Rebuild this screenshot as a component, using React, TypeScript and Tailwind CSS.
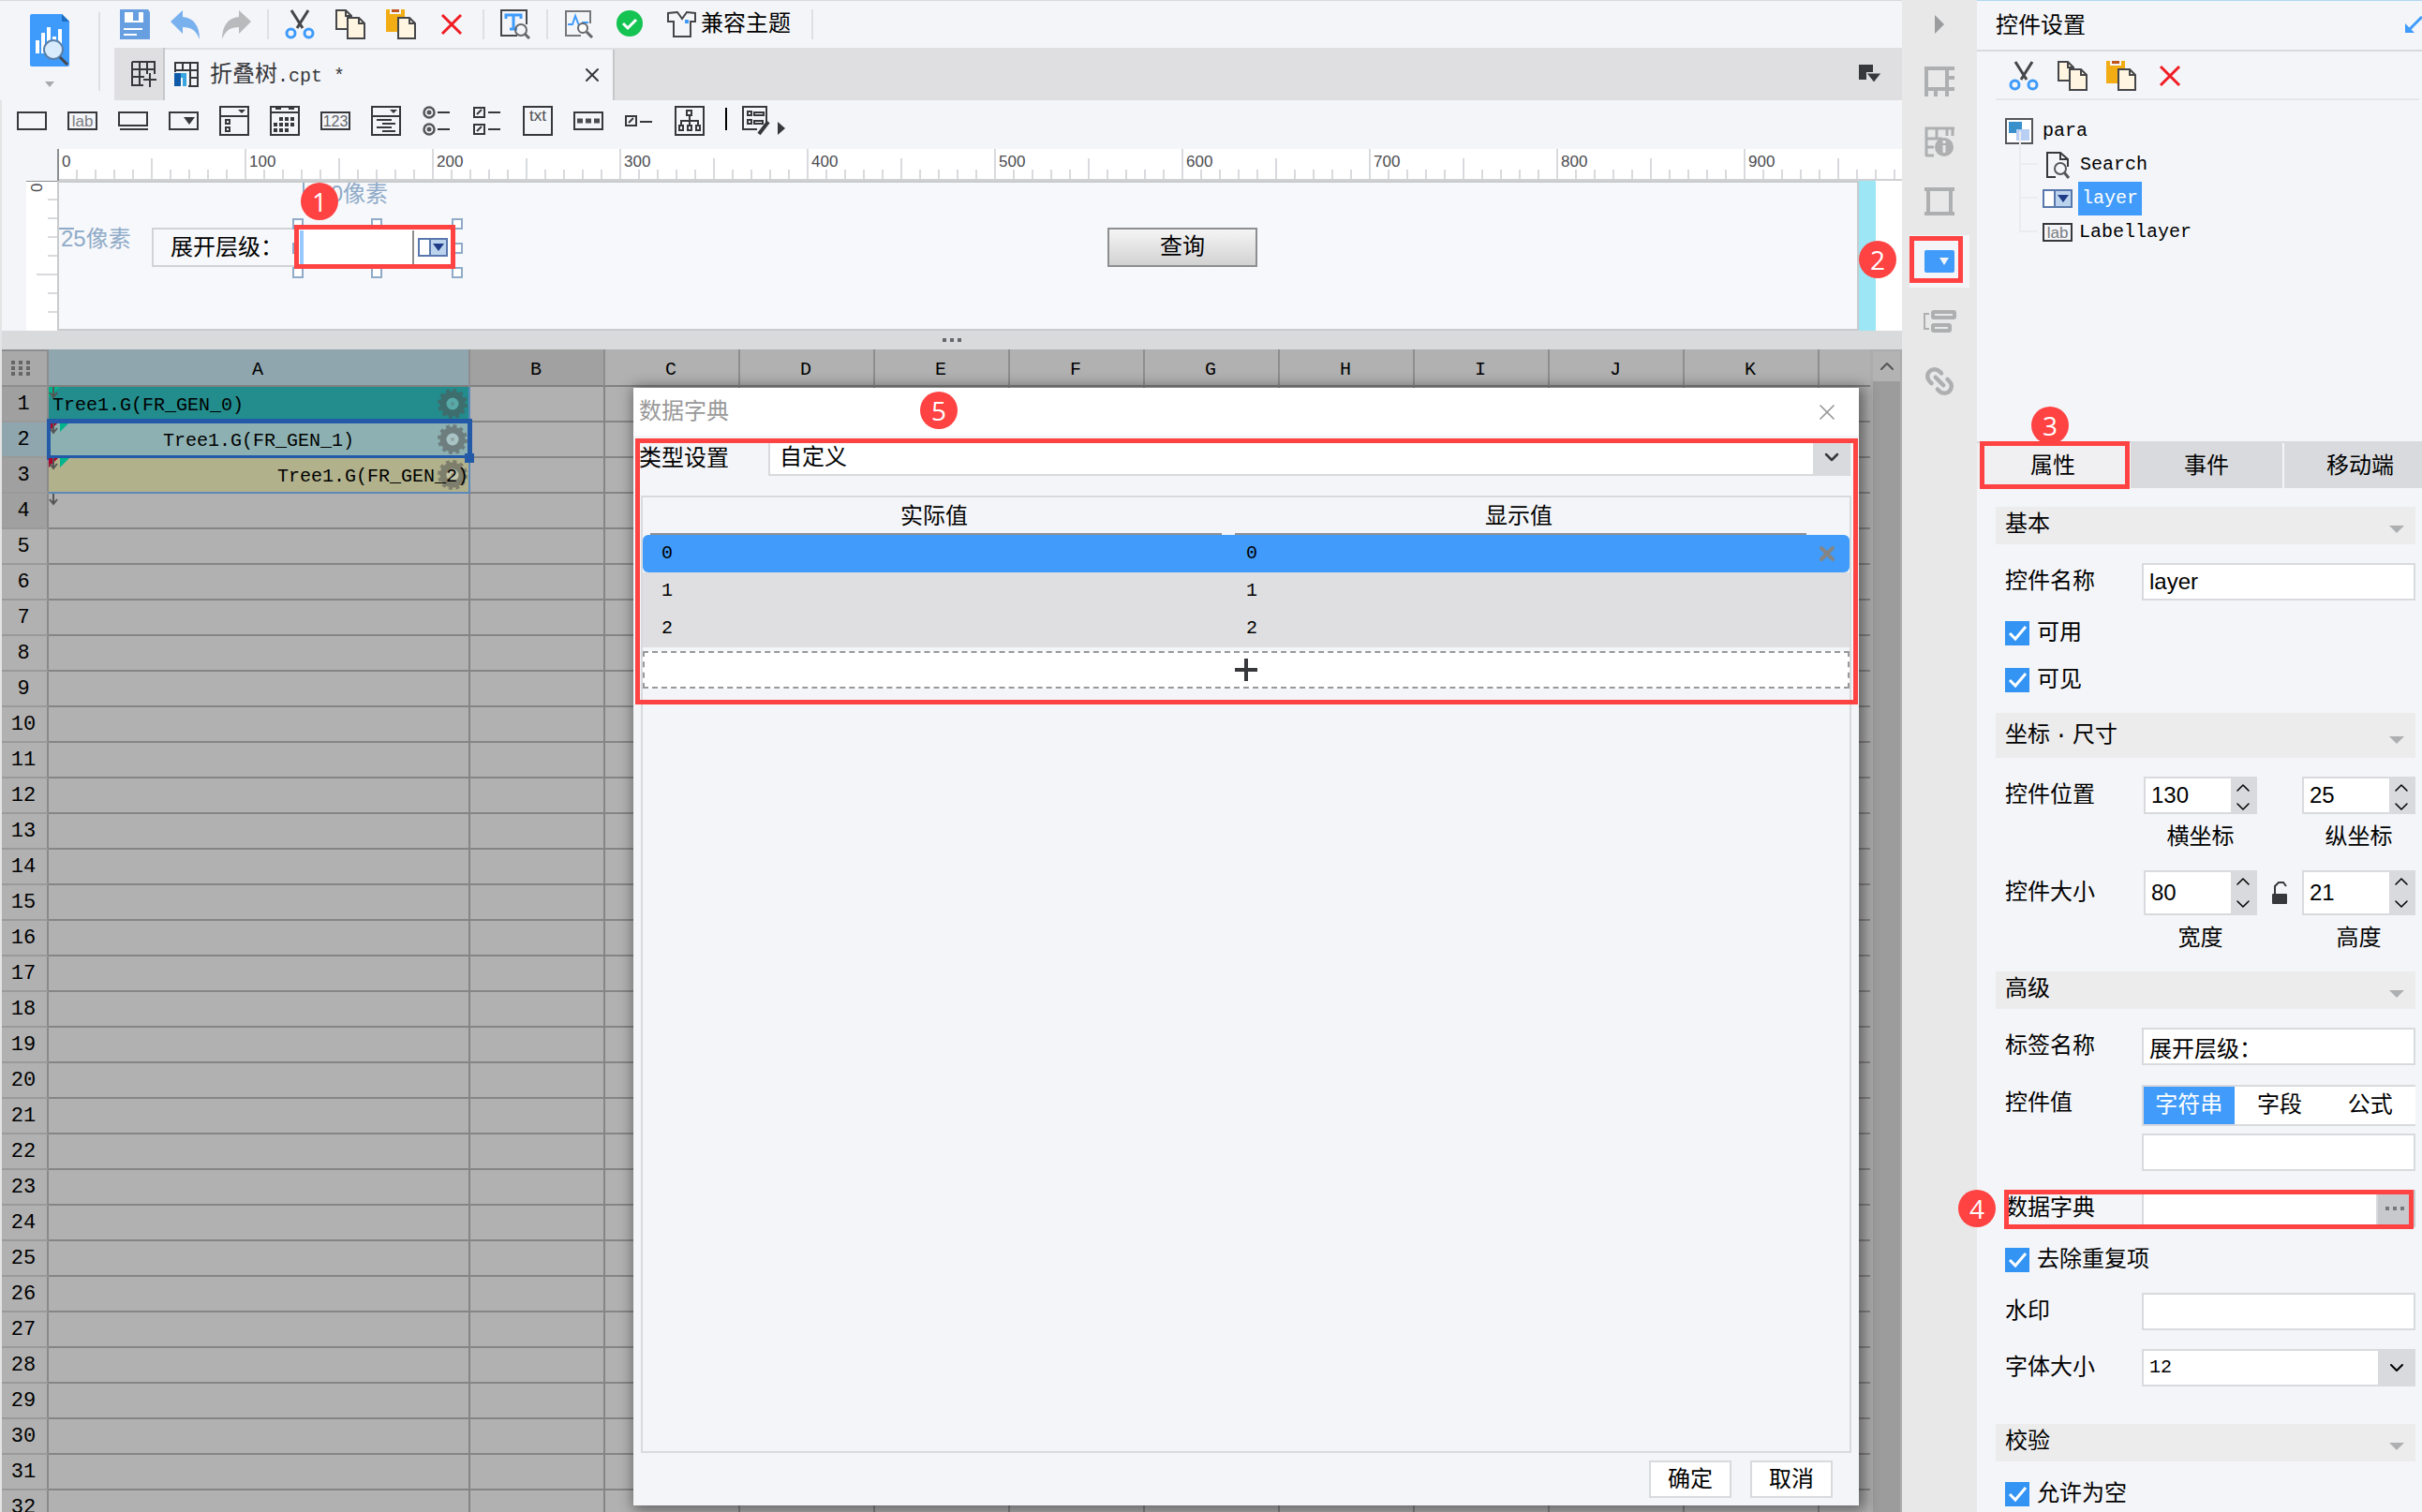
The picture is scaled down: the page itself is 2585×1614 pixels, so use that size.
import { useState } from "react";
import type { ReactNode } from "react";
import clsx from "clsx";
import { ChevronDown, ChevronUp, Link2, X } from "lucide-react";

const columns = ["A", "B", "C", "D", "E", "F", "G", "H", "I", "J", "K", ""];
const rows = Array.from({ length: 32 }, (_, i) => i + 1);

const treeCells: Record<number, { text: string; className: string }> = {
  1: { text: "Tree1.G(FR_GEN_0)", className: "bg-[#238c8c] px-1 text-left" },
  2: { text: "Tree1.G(FR_GEN_1)", className: "bg-[#8db1b2] px-1 text-center" },
  3: { text: "Tree1.G(FR_GEN_2)", className: "bg-[#b1b18c] text-right" },
};

const dictionary = [
  { actual: "0", display: "0" },
  { actual: "1", display: "1" },
  { actual: "2", display: "2" },
];

function Badge({ n, className }: { n: number; className: string }) {
  return (
    <span
      className={clsx(
        "absolute z-20 flex h-10 w-10 items-center justify-center rounded-full bg-[#ff4242] font-['Open_Sans',sans-serif] text-[28px] leading-none text-white",
        className
      )}
    >
      {n}
    </span>
  );
}

function Marker({ className }: { className: string }) {
  return (
    <span
      className={clsx(
        "pointer-events-none absolute z-10 border-[5px] border-[#ff4242]",
        className
      )}
    />
  );
}

function Icon({ children, className }: { children: ReactNode; className?: string }) {
  return (
    <svg
      viewBox="0 0 32 32"
      fill="none"
      className={clsx("h-8 w-8 shrink-0", className)}
      aria-hidden="true"
    >
      {children}
    </svg>
  );
}

function ToolButton({ label, children }: { label: string; children: ReactNode }) {
  return (
    <button type="button" aria-label={label} className="flex h-8 shrink-0 items-center">
      {children}
    </button>
  );
}

function Separator() {
  return <span className="mx-[17px] h-8 w-[2px] bg-[#dfe0e3]" />;
}

function CutIcon() {
  return (
    <Icon>
      <path d="M7 1 19 20M25 1 13 20" stroke="#45464a" strokeWidth="3" />
      <circle cx="6.500" cy="25.500" r="4.500" stroke="#3f9bfb" strokeWidth="3" />
      <circle cx="25.500" cy="25.500" r="4.500" stroke="#3f9bfb" strokeWidth="3" />
    </Icon>
  );
}

function CopyIcon() {
  return (
    <Icon>
      <path d="M12 21H1V1h10l6 6v4" fill="#fff5e0" stroke="#45464a" strokeWidth="2" />
      <path d="M13 9h12l6 6v16H13z" fill="#fff5e0" stroke="#45464a" strokeWidth="2" />
      <path d="M11 1v6h6M25 9v6h6" stroke="#45464a" strokeWidth="2" />
    </Icon>
  );
}

function PasteIcon() {
  return (
    <Icon>
      <path d="M0 0h20v24H0z" fill="#f2ac14" />
      <path d="M4 0h12v5H4z" fill="#f4f5f8" />
      <path d="M6 0h8v3H6z" fill="#c0561c" />
      <path d="M13 9h12l6 6v16H13z" fill="#fff5e0" stroke="#45464a" strokeWidth="2" />
      <path d="M25 9v6h6" stroke="#45464a" strokeWidth="2" />
    </Icon>
  );
}

function DeleteIcon() {
  return (
    <Icon>
      <path d="m6 6 20 20M26 6 6 26" stroke="#f01c24" strokeWidth="3" />
    </Icon>
  );
}

function ComboIcon({ className }: { className?: string }) {
  return (
    <svg viewBox="0 0 32 20" className={clsx("h-5 w-8 shrink-0", className)} aria-hidden="true">
      <path d="M1 1h30v18H1z" fill="#fff" stroke="#5878ad" strokeWidth="2" />
      <path d="M13 2h17v16H13z" fill="#bcd3ee" />
      <path d="M13 1v18" stroke="#5878ad" strokeWidth="2" />
      <path d="M16 6h12l-6 8z" fill="#1e3c88" />
    </svg>
  );
}

function LabelIcon() {
  return (
    <Icon>
      <path d="M1 7h30v18H1z" stroke="#37383c" strokeWidth="2" />
      <text x="16" y="22" textAnchor="middle" fontSize="17" fontFamily="Liberation Sans" fill="#7b7c80">
        lab
      </text>
    </Icon>
  );
}

const stroke = { stroke: "#37383c", strokeWidth: 2 };

const widgets: { label: string; icon: ReactNode }[] = [
  { label: "文本", icon: <Icon><path d="M1 7h30v18H1z" {...stroke} /></Icon> },
  { label: "标签", icon: <LabelIcon /> },
  { label: "按钮", icon: <Icon><path d="M1 7h30v14H1zM2 25h30" {...stroke} /></Icon> },
  {
    label: "下拉框",
    icon: (
      <Icon>
        <path d="M1 7h30v18H1z" {...stroke} />
        <path d="M16 12h12l-6 8z" fill="#37383c" />
      </Icon>
    ),
  },
  {
    label: "下拉复选框",
    icon: (
      <Icon>
        <path d="M1 1h30v30H1zM1 11h30M7 15h4v4H7zM7 23h4v4H7z" {...stroke} />
        <path d="M20 4h8l-4 4z" fill="#37383c" />
      </Icon>
    ),
  },
  {
    label: "日期",
    icon: (
      <Icon>
        <path d="M1 1h30v30H1zM1 7h30" {...stroke} />
        <path d="M6 3h6M20 3h6" {...stroke} />
        <path d="M10 14h16M4 20h22M4 26h16" stroke="#37383c" strokeWidth="4" strokeDasharray="4 2" />
      </Icon>
    ),
  },
  {
    label: "数字",
    icon: (
      <Icon>
        <path d="M1 7h30v18H1z" {...stroke} />
        <text x="16" y="22" textAnchor="middle" fontSize="16" fontFamily="Liberation Sans" fill="#66676b">
          123
        </text>
      </Icon>
    ),
  },
  {
    label: "下拉树",
    icon: (
      <Icon>
        <path d="M1 1h30v30H1zM1 11h30M6 15h16M12 19h14M6 23h16M12 27h14" {...stroke} />
        <path d="M20 4h8l-4 4z" fill="#37383c" />
      </Icon>
    ),
  },
  {
    label: "单选按钮组",
    icon: (
      <Icon>
        <g stroke="#55565a" strokeWidth="2.500">
          <circle cx="8" cy="7" r="5.500" />
          <circle cx="8" cy="25" r="5.500" />
        </g>
        <circle cx="8" cy="7" r="2.500" fill="#55565a" />
        <circle cx="8" cy="25" r="2.500" fill="#55565a" />
        <path d="M17 7h13M17 25h13" {...stroke} />
      </Icon>
    ),
  },
  {
    label: "复选框组",
    icon: (
      <Icon>
        <path d="M2 2h11v10H2zM2 20h11v10H2zM17 7h13M17 25h13" {...stroke} />
        <path d="m5 9 5-5M5 27l5-5" {...stroke} />
      </Icon>
    ),
  },
  {
    label: "文本域",
    icon: (
      <Icon>
        <path d="M1 1h30v30H1z" {...stroke} />
        <text x="16" y="16" textAnchor="middle" fontSize="17" fontFamily="Liberation Sans" fill="#4b4c50">
          txt
        </text>
      </Icon>
    ),
  },
  {
    label: "密码",
    icon: (
      <Icon>
        <path d="M1 7h30v18H1z" {...stroke} />
        <path d="M4 16h24" stroke="#4b4c50" strokeWidth="5" strokeDasharray="6 3" />
      </Icon>
    ),
  },
  {
    label: "复选框",
    icon: (
      <Icon>
        <path d="M2 11h11v10H2zM17 17h13" {...stroke} />
        <path d="m5 18 5-5" {...stroke} />
      </Icon>
    ),
  },
  {
    label: "视图树",
    icon: (
      <Icon>
        <path d="M1 1h30v30H1z" {...stroke} />
        <path d="M13 5h5v5h-5zM5 21h4v5H5zM14 21h4v5h-4zM23 21h4v5h-4zM16 10v11M7 21v-5h18v5" {...stroke} />
      </Icon>
    ),
  },
];

function Gear() {
  return (
    <svg viewBox="0 0 34 34" className="absolute top-[1px] right-0 h-[34px] w-[34px]" aria-hidden="true">
      <g fill="none" stroke="#555" opacity="0.55">
        <circle cx="17" cy="17" r="10" strokeWidth="7" />
        <circle cx="17" cy="17" r="14.500" strokeWidth="3" strokeDasharray="4 3.590" />
      </g>
      <circle cx="17" cy="17" r="6.500" fill="#fff" opacity="0.25" />
      <circle cx="17" cy="17" r="2" fill="#555" opacity="0.3" />
    </svg>
  );
}

function CellMark({ row }: { row: number }) {
  return (
    <svg viewBox="0 0 24 14" className="absolute top-0 left-0 h-[14px] w-6" aria-hidden="true">
      {row === 1 && <path d="M0 0h12L0 12z" fill="#00b38c" />}
      {(row === 2 || row === 3) && (
        <>
          <path d="M0 0h10L0 10z" fill="#b0002c" />
          <path d="M12 0h10L12 10z" fill="#00b38c" />
        </>
      )}
      <path d="M5 0v11M1 6l4 5 4-5" fill="none" stroke="#555" strokeWidth="2" />
    </svg>
  );
}

function Header() {
  return (
    <header className="flex h-[107px] shrink-0 border-t border-[#dadadb]">
      <div className="flex w-[122px] shrink-0">
        <button type="button" aria-label="菜单" className="flex w-[105px] flex-col items-center gap-4 pt-[14px]">
          <svg viewBox="0 0 42 56" className="h-14 w-[42px]" aria-hidden="true">
            <path d="M2 0h32l8 8v46a2 2 0 0 1-2 2H2a2 2 0 0 1-2-2V2a2 2 0 0 1 2-2z" fill="#3f9bfb" />
            <path d="M34 0v8h8z" fill="#1c6fc0" />
            <path d="M8 42V28M14 42V20M20 42V14M26 42V24M32 42V16" stroke="#fff" strokeWidth="4" />
            <circle cx="25" cy="38" r="10" fill="#d8ebfd" stroke="#5a7fa8" strokeWidth="2" />
            <path d="m32 46 8 8" stroke="#45464a" strokeWidth="3" />
          </svg>
          <svg viewBox="0 0 10 6" className="h-[6px] w-[10px]" aria-hidden="true">
            <path d="M0 0h10L5 6z" fill="#a8a9ac" />
          </svg>
        </button>
        <span className="mt-3 h-[84px] w-[2px] bg-[#dfe0e3]" />
      </div>
      <div className="flex min-w-0 flex-1 flex-col">
        <div className="flex h-[50px] shrink-0 items-center pl-[6px]">
          <div className="flex gap-[22px]">
            <ToolButton label="保存">
              <Icon>
                <path d="M0 0h30l2 3v29H0z" fill="#689fe0" />
                <path d="M5 3h20v11H5z" fill="#fff" />
                <path d="M14 3h6v9h-6z" fill="#689fe0" />
                <path d="M4 21h20M4 27h14" stroke="#fff" strokeWidth="2" />
              </Icon>
            </ToolButton>
            <ToolButton label="撤销">
              <Icon>
                <path d="M0 13 13 1v7c12 1 18 10 18 24C27 22 22 19 13 19v7z" fill="#79b1ee" />
              </Icon>
            </ToolButton>
            <ToolButton label="重做">
              <Icon>
                <path d="M32 13 19 1v7C7 9 1 18 1 32c4-10 9-13 18-13v7z" fill="#b9babc" />
              </Icon>
            </ToolButton>
          </div>
          <Separator />
          <div className="flex gap-[22px]">
            <ToolButton label="剪切"><CutIcon /></ToolButton>
            <ToolButton label="复制"><CopyIcon /></ToolButton>
            <ToolButton label="粘贴"><PasteIcon /></ToolButton>
            <ToolButton label="删除"><DeleteIcon /></ToolButton>
          </div>
          <Separator />
          <ToolButton label="模板主题">
            <Icon>
              <path d="M28 16V1H1v27h17" stroke="#45464a" strokeWidth="2" />
              <path d="M6 10V6h16v4M14 6v15M10 21h8" stroke="#3f9bfb" strokeWidth="3" />
              <circle cx="22" cy="22" r="6" stroke="#66676b" strokeWidth="2" />
              <path d="m26 26 5 5" stroke="#66676b" strokeWidth="3" />
            </Icon>
          </ToolButton>
          <Separator />
          <div className="flex gap-[22px]">
            <ToolButton label="性能">
              <Icon>
                <path d="M28 16V3H2v26h16" stroke="#77787c" strokeWidth="2" />
                <path d="M4 17h5l3-9 5 13 3-6h6" stroke="#3f9bfb" strokeWidth="2" />
                <circle cx="20" cy="21" r="5" fill="#fff" stroke="#66676b" strokeWidth="2" />
                <path d="m24 25 6 6" stroke="#66676b" strokeWidth="3" />
              </Icon>
            </ToolButton>
            <ToolButton label="检测通过">
              <Icon>
                <circle cx="16" cy="16" r="14" fill="#14c352" />
                <path d="m9 16 5 5 9-9" stroke="#fff" strokeWidth="3" />
              </Icon>
            </ToolButton>
            <button type="button" className="flex items-center gap-1 pl-[2px] text-2xl leading-8 text-black">
              <Icon>
                <path d="M11 3 1 4v9h6v16h18V13h5V4l-9-1-5 7z" stroke="#45464a" strokeWidth="2" />
                <path d="M19 11h4v4h-4z" fill="#3f9bfb" />
              </Icon>
              <span className="pt-[2px]">兼容主题</span>
            </button>
          </div>
          <span className="ml-[22px] h-8 w-[2px] bg-[#dfe0e3]" />
        </div>
        <div className="flex flex-1 bg-[#dfdfe2]">
          <button type="button" aria-label="新建" className="flex w-[54px] items-center justify-center border-r-2 border-[#c6c7c9]">
            <Icon className="ml-3">
              <path d="M3 3h24v13M3 3v25h12M3 11h24M3 19h13M11 3v25M19 3v13M15 22h14M22 15v15" {...stroke} />
            </Icon>
          </button>
          <div className="mt-[2px] flex w-[480px] items-center border-r-2 border-[#c6c7c9] bg-[#f4f5f8] pr-[10px] pl-2 text-2xl text-[#37383c]">
            <Icon>
              <path d="M3 13V3h24v25H17M3 11h24M19 19h8M11 3v8M19 3v25" {...stroke} />
              <path d="M2 14h7v14H2z" fill="#0f5aa8" />
              <path d="M9 14h6v14h-4v-9H9z" fill="#38a5e0" />
            </Icon>
            <span className="ml-2 flex-1 pt-[2px] leading-8">
              折叠树<span className="text-xl">.cpt *</span>
            </span>
            <button type="button" aria-label="关闭标签">
              <X className="h-6 w-6" strokeWidth={2} />
            </button>
          </div>
          <button type="button" aria-label="标签列表" className="mr-5 ml-auto">
            <svg viewBox="0 0 26 20" className="h-5 w-[26px]" aria-hidden="true">
              <path d="M0 0h15v8H8v8H0z" fill="#37383c" />
              <path d="M8 9h16l-8 10z" fill="#37383c" stroke="#dfdfe2" />
            </svg>
          </button>
        </div>
      </div>
    </header>
  );
}

function WidgetBar() {
  return (
    <div className="flex h-[52px] shrink-0 items-start pt-[6px] pl-4">
      <div className="flex gap-[22px]">
        {widgets.map((item) => (
          <ToolButton key={item.label} label={item.label}>
            {item.icon}
          </ToolButton>
        ))}
      </div>
      <span className="mt-[2px] mr-4 ml-[22px] h-6 w-[2px] bg-black" />
      <ToolButton label="预定义控件">
        <Icon>
          <path d="M26 18V1H1v24h15" {...stroke} />
          <path d="M6 6h4v4H6zM6 15h4v4H6zM13 7h10v3H13zM13 16h9v3h-9z" {...stroke} />
          <path d="m28 17-10 13" stroke="#37383c" strokeWidth="4" />
        </Icon>
        <svg viewBox="0 0 8 14" className="mt-4 ml-[6px] h-[14px] w-2" aria-hidden="true">
          <path d="M0 0v14l8-7z" fill="#37383c" />
        </svg>
      </ToolButton>
    </div>
  );
}

function Ruler() {
  return (
    <div className="flex h-[34px] shrink-0">
      <div className="w-[59px] shrink-0" />
      <svg className="h-full min-w-0 flex-1 bg-white" aria-hidden="true">
        <defs>
          <pattern id="ticks" width="200" height="34" patternUnits="userSpaceOnUse">
            <path
              d="M1 0v34M101 10v24M21 22v12M41 22v12M61 22v12M81 22v12M121 22v12M141 22v12M161 22v12M181 22v12"
              stroke="#d9dadd"
              strokeWidth="2"
            />
          </pattern>
        </defs>
        <rect width="100%" height="34" fill="url(#ticks)" />
        <rect y="32" width="100%" height="2" fill="#d0d1d4" />
        <path d="M1 0v34" stroke="#8d8e90" strokeWidth="2" />
        {[0, 1, 2, 3, 4, 5, 6, 7, 8, 9].map((n) => (
          <text key={n} x={n * 200 + 5} y={19} fontSize="17" fontFamily="Liberation Sans" fill="#4b4c50">
            {n * 100}
          </text>
        ))}
      </svg>
    </div>
  );
}

function Handle({ className }: { className: string }) {
  return <span className={clsx("absolute h-3 w-3 border-2 border-[#8fabc8] bg-white", className)} />;
}

function ParamCanvas() {
  return (
    <div className="flex h-40 shrink-0 bg-white">
      <div className="w-[26px] shrink-0 bg-[#f4f5f8]" />
      <svg className="h-full w-[33px] shrink-0 bg-white" aria-hidden="true">
        <path
          d="M23 20h10M23 40h10M23 60h10M23 80h10M11 100h22M23 120h10M23 140h10"
          stroke="#d9dadd"
          strokeWidth="2"
        />
        <text x="-12" y="17" transform="rotate(-90)" fontSize="17" fontFamily="Liberation Sans" fill="#4b4c50">
          0
        </text>
        <path d="M0 0h33" stroke="#8d8e90" strokeWidth="2" />
      </svg>
      <div className="relative min-w-0 flex-1 border-2 border-[#c9cbcd] bg-[#f7f8fb]">
        <span className="absolute top-0 left-[260px] h-4 w-[2px] bg-[#8fabc8]" />
        <span className="absolute top-0 left-[263px] font-['Liberation_Sans','Noto_Sans_CJK_SC',sans-serif] text-2xl leading-6 text-[#8fabc8]">
          130像素
        </span>
        <span className="absolute top-12 left-0 h-[2px] w-4 bg-[#8fabc8]" />
        <span className="absolute top-12 left-[2px] font-['Liberation_Sans','Noto_Sans_CJK_SC',sans-serif] text-2xl leading-6 text-[#8fabc8]">
          25像素
        </span>
        <label
          htmlFor="param-layer"
          className="absolute top-12 left-[99px] h-[42px] w-[154px] border-2 border-[#d2d3d5] pl-[18px] text-2xl leading-[42px] whitespace-nowrap text-black"
        >
          展开层级：
        </label>
        <Handle className="top-[38px] left-[249px]" />
        <Handle className="top-[38px] left-[333px]" />
        <Handle className="top-[38px] left-[419px]" />
        <Handle className="top-16 left-[249px]" />
        <Handle className="top-16 left-[419px]" />
        <Handle className="top-[90px] left-[249px]" />
        <Handle className="top-[90px] left-[333px]" />
        <Handle className="top-[90px] left-[419px]" />
        <div className="absolute top-[46px] left-[252px] flex h-[46px] w-[170px] items-center bg-white pl-[5px]">
          <input id="param-layer" className="h-9 w-[122px] border-r-2 border-l-4 border-r-[#8d8e90] border-l-[#99c8ff] bg-white outline-none" />
          <ComboIcon className="ml-1" />
        </div>
        <Marker className="top-[45px] left-[251px] h-[47px] w-[172px]" />
        <Badge n={1} className="top-0 left-[258px]" />
        <button
          type="button"
          className="absolute top-12 left-[1119px] h-[42px] w-40 border-2 border-[#8d8e90] bg-linear-to-b from-[#f5f5f5] to-[#d2d2d2] pt-[2px] text-2xl leading-9 text-black"
        >
          查询
        </button>
      </div>
      <div className="w-[18px] shrink-0 bg-[#9ce6f5]" />
      <div className="relative w-7 shrink-0 bg-white">
        <Badge n={2} className="top-16 right-[6px]" />
      </div>
    </div>
  );
}

function Grid() {
  return (
    <div className="flex h-full bg-[#b1b1b1]">
      <div className="min-w-0 flex-1 overflow-hidden">
        <table className="w-full table-fixed border-separate border-spacing-0 text-xl text-black">
          <colgroup>
            <col className="w-[50px]" />
            <col className="w-[450px]" />
            {columns.slice(1, 11).map((name) => (
              <col key={name} className="w-36" />
            ))}
            <col />
          </colgroup>
          <thead>
            <tr className="h-10">
              <th className="border-2 border-l-0 border-[#8e8e8e] bg-[#a9a9a9] p-0">
                <svg viewBox="0 0 20 16" className="ml-[10px] h-4 w-5" aria-hidden="true">
                  <path d="M0 2h20M0 8h20M0 14h20" stroke="#666" strokeWidth="4" strokeDasharray="4 4" />
                </svg>
              </th>
              {columns.map((name) => (
                <th
                  key={name}
                  className={clsx(
                    "border-r-2 border-b-2 border-r-[#8e8e8e] border-b-[#808080] p-0 pt-[6px] pr-[2px] leading-6 font-normal last:border-r-0",
                    name === "A" && "border-b-[#5c89b8] bg-[#8fa6ae]",
                    name === "B" && "bg-[#a1a1a1]"
                  )}
                >
                  {name}
                </th>
              ))}
            </tr>
          </thead>
          <tbody>
            {rows.map((row) => (
              <tr key={row} className="h-[38px]">
                <th
                  className={clsx(
                    "border-r-2 border-b-2 border-r-[#8a8a8a] border-b-[#9a9a9a] p-0 pt-[2px] pr-[2px] text-[22px] leading-6 font-normal",
                    row === 2 && "bg-[#8fa6ae]",
                    row < 5 && row !== 2 && "bg-[#a0a0a0]"
                  )}
                >
                  {row}
                </th>
                {columns.map((name) => {
                  const cell = name === "A" ? treeCells[row] : undefined;
                  return (
                    <td
                      key={name}
                      className={clsx(
                        "relative border-r-2 border-b-2 border-[#858585] p-0 leading-6 last:border-r-0",
                        cell && cell.className,
                        cell && "border-r-[#5c89b8] pt-1",
                        cell && row === 3 && "border-b-[#5c89b8]"
                      )}
                    >
                      {name === "A" && row < 5 && <CellMark row={row} />}
                      {cell && <Gear />}
                      {cell && <span className="relative">{cell.text}</span>}
                      {name === "A" && row === 2 && (
                        <>
                          <span className="absolute -top-1 -right-1 -bottom-1 -left-[2px] border-[5px] border-l-4 border-[#2459a8]" />
                          <span className="absolute -right-[6px] -bottom-[7px] z-10 h-[10px] w-[10px] bg-[#2459a8]" />
                        </>
                      )}
                    </td>
                  );
                })}
              </tr>
            ))}
          </tbody>
        </table>
      </div>
      <div className="flex w-[34px] shrink-0 flex-col bg-[#acacac] pt-[2px] pr-[2px] pl-[3px]">
        <button type="button" aria-label="向上滚动" className="flex h-8 shrink-0 items-center justify-center bg-[#b3b3b3]">
          <ChevronUp className="h-6 w-6 text-[#555]" strokeWidth={2} />
        </button>
        <div className="flex-1 bg-[#9c9c9c]" />
      </div>
    </div>
  );
}

function DictionaryDialog() {
  return (
    <section
      role="dialog"
      aria-label="数据字典"
      className="absolute top-[41px] right-[46px] bottom-[7px] left-[674px] flex flex-col bg-[#f4f5f8] shadow-[3px_2px_14px_3px_rgba(0,0,0,0.45)]"
    >
      <Badge n={5} className="top-1 left-[306px]" />
      <Marker className="top-[54px] right-[1px] left-[2px] h-[284px]" />
      <div className="flex h-[51px] shrink-0 items-center justify-between bg-white pr-5 pl-[6px]">
        <h2 className="pt-[2px] text-2xl leading-8 text-[#999]">数据字典</h2>
        <button type="button" aria-label="关闭">
          <X className="h-7 w-7 text-[#999]" strokeWidth={1.5} />
        </button>
      </div>
      <div className="mt-[3px] flex h-10 shrink-0 pr-[9px] pl-[6px] text-2xl text-black">
        <label htmlFor="dict-type" className="w-[138px] leading-[46px]">
          类型设置
        </label>
        <div className="relative flex-1">
          <select
            id="dict-type"
            className="h-full w-full appearance-none border-2 border-[#d9dadd] bg-white px-[10px] pt-1 leading-8 outline-none"
          >
            <option>自定义</option>
          </select>
          <span className="pointer-events-none absolute top-0 right-0 flex h-full w-10 items-center justify-center bg-[#d9dadd]">
            <ChevronDown className="h-6 w-6 text-[#37383c]" strokeWidth={2.5} />
          </span>
        </div>
      </div>
      <div className="mx-2 mt-[21px] flex-1 border-2 border-[#d9dadd]">
        <table className="w-full table-fixed border-separate border-spacing-0 text-black">
          <colgroup>
            <col />
            <col />
            <col className="w-10" />
          </colgroup>
          <thead>
            <tr className="text-2xl">
              <th className="p-0 font-normal">
                <div className="mr-[6px] ml-2 h-10 border-b-2 border-[#8f9092] pr-1 leading-[44px]">实际值</div>
              </th>
              <th className="p-0 font-normal">
                <div className="mr-[6px] ml-2 h-10 border-b-2 border-[#8f9092] pr-1 leading-[44px]">显示值</div>
              </th>
              <th className="p-0" />
            </tr>
          </thead>
          <tbody>
            {dictionary.map((item, i) => {
              const bg = i === 0 ? "bg-[#409bfa]" : "bg-[#dfdfe1]";
              return (
                <tr key={item.actual} className="h-10 text-xl">
                  <td className={clsx("p-0 pl-5", bg, i === 0 && "rounded-l-md")}>{item.actual}</td>
                  <td className={clsx("p-0 pl-5", bg)}>{item.display}</td>
                  <td className={clsx("p-0", bg, i === 0 && "rounded-r-md")}>
                    {i === 0 && (
                      <button type="button" aria-label="删除此行" className="ml-1 flex">
                        <X className="h-6 w-6 text-[#858585]" strokeWidth={4} />
                      </button>
                    )}
                  </td>
                </tr>
              );
            })}
          </tbody>
        </table>
        <button
          type="button"
          aria-label="添加"
          className="mt-1 flex h-10 w-full items-center justify-center border-2 border-dashed border-[#999] bg-white"
        >
          <svg viewBox="0 0 24 24" className="h-6 w-6" aria-hidden="true">
            <path d="M12 0v24M0 12h24" stroke="#37383c" strokeWidth="4" />
          </svg>
        </button>
      </div>
      <div className="flex h-14 shrink-0 justify-end gap-5 pt-2 pr-7">
        {["确定", "取消"].map((text) => (
          <button
            key={text}
            type="button"
            className="h-10 w-[88px] border-2 border-[#d9dadd] bg-white pt-[3px] text-2xl leading-8 text-black"
          >
            {text}
          </button>
        ))}
      </div>
    </section>
  );
}

const railItems: { label: string; active?: boolean; icon: ReactNode }[] = [
  {
    label: "单元格元素",
    icon: <path d="M2 32V2h30M2 24h30M24 2v30M24 12h8M12 24v8" stroke="#aeafb1" strokeWidth="4" />,
  },
  {
    label: "单元格属性",
    icon: (
      <>
        <path d="M2 32V2h30M2 13h17M13 2v11M2 22h8M24 2v8M2 31h8" stroke="#aeafb1" strokeWidth="3" />
        <path d="M30 2v8" stroke="#aeafb1" strokeWidth="3" />
        <circle cx="21" cy="22" r="10" fill="#aeafb1" />
        <path d="M21 15v3M21 20v8" stroke="#e8e8e8" strokeWidth="3" />
      </>
    ),
  },
  {
    label: "悬浮元素",
    icon: (
      <>
        <path d="M4 3h24v26H4z" stroke="#aeafb1" strokeWidth="4" />
        <path d="M0 1h4v4H0zM28 1h4v4h-4zM0 27h4v4H0zM28 27h4v4h-4z" fill="#aeafb1" />
      </>
    ),
  },
  {
    label: "控件设置",
    active: true,
    icon: (
      <>
        <rect y="4" width="32" height="24" rx="2" fill="#409bfa" />
        <path d="M16 12h10l-5 8z" fill="#f4f5f8" />
      </>
    ),
  },
  {
    label: "条件属性",
    icon: (
      <>
        <path d="M5 8H0v16h5" stroke="#aeafb1" strokeWidth="2" />
        <rect x="9" y="6" width="23" height="6" rx="1" stroke="#aeafb1" strokeWidth="4" />
        <rect x="9" y="20" width="18" height="6" rx="1" stroke="#aeafb1" strokeWidth="4" />
      </>
    ),
  },
];

function Rail() {
  return (
    <nav className="flex w-20 shrink-0 flex-col items-center gap-2 bg-[#e8e8e8]">
      <button type="button" aria-label="收起" className="flex h-[51px] items-center">
        <svg viewBox="0 0 10 20" className="h-5 w-[10px]" aria-hidden="true">
          <path d="M0 0v20l10-10z" fill="#9b9c9e" />
        </svg>
      </button>
      {railItems.map((item) => (
        <button
          key={item.label}
          type="button"
          aria-label={item.label}
          className={clsx(
            "relative flex h-14 w-16 items-center justify-center",
            item.active && "bg-[#f4f5f8]"
          )}
        >
          <Icon className="overflow-visible">{item.icon}</Icon>
          {item.active && <Marker className="top-[1px] left-0 h-[50px] w-[57px]" />}
        </button>
      ))}
      <button type="button" aria-label="超级链接" className="flex h-14 w-16 items-center justify-center">
        <Link2 className="h-9 w-9 rotate-45 text-[#aeafb1]" strokeWidth={3} />
      </button>
    </nav>
  );
}

function WidgetTree() {
  const child = "relative flex h-9 items-center pl-[70px] text-xl";
  const branch = "absolute -top-[18px] left-[45px] h-9 w-5 border-b-2 border-l-2 border-[#ececef]";
  return (
    <ul className="h-[364px] shrink-0 pt-[15px] text-black">
      <li className="flex h-9 items-center gap-[10px] pl-[30px] text-xl">
        <svg viewBox="0 0 30 28" className="h-7 w-[30px]" aria-hidden="true">
          <path d="M1 1h28v26H1z" fill="#fff" stroke="#55565a" strokeWidth="2" />
          <path d="M4 4h14v12H4z" fill="#3990cb" />
          <path d="M12 12h14v12H12z" fill="#b8cff3" />
        </svg>
        para
      </li>
      <li className={child}>
        <span className={branch} />
        <Icon>
          <path d="M14 29H5V3h14l8 7v8M19 3v7h8" {...stroke} />
          <circle cx="19" cy="20" r="6" stroke="#55565a" strokeWidth="2" />
          <path d="m23 24 5 6" stroke="#55565a" strokeWidth="3" />
        </Icon>
        <span className="ml-2">Search</span>
      </li>
      <li className={child}>
        <span className={branch} />
        <ComboIcon />
        <span className="ml-[6px] bg-[#409bfa] px-1 leading-9 text-white">layer</span>
      </li>
      <li className={child}>
        <span className={branch} />
        <LabelIcon />
        <span className="ml-[7px]">Labellayer</span>
      </li>
    </ul>
  );
}

function Section({ title, className = "h-10" }: { title: ReactNode; className?: string }) {
  return (
    <button
      type="button"
      className={clsx(
        "flex shrink-0 items-center justify-between bg-[#ececec] pr-3 pl-[10px] text-2xl leading-8",
        className
      )}
    >
      <span>{title}</span>
      <svg viewBox="0 0 16 8" className="mt-2 h-2 w-4" aria-hidden="true">
        <path d="M0 0h16L8 8z" fill="#aeafb1" />
      </svg>
    </button>
  );
}

function Check({ label }: { label: string }) {
  const [checked, setChecked] = useState(true);
  return (
    <label className="flex h-[30px] shrink-0 items-center gap-2 pl-[10px] text-2xl">
      <span className="relative h-[26px] w-[26px]">
        <input
          type="checkbox"
          checked={checked}
          onChange={(e) => setChecked(e.target.checked)}
          className="block h-[26px] w-[26px] appearance-none border border-[#d9dadd] bg-white checked:border-[#3394f3] checked:bg-[#3394f3]"
        />
        <svg viewBox="0 0 26 26" fill="none" className="pointer-events-none absolute inset-0" aria-hidden="true">
          <path d="m5 13 6 6L22 6" stroke="#fff" strokeWidth="3" />
        </svg>
      </span>
      <span className="pt-[2px]">{label}</span>
    </label>
  );
}

const field =
  "h-10 w-full min-w-0 border-2 border-[#d9dadd] bg-white px-[6px] font-['Liberation_Sans','Noto_Sans_CJK_SC',sans-serif] text-2xl leading-8 outline-none";

function Row({ label, id, tall, children }: { label: string; id?: string; tall?: boolean; children: ReactNode }) {
  return (
    <div className="relative flex shrink-0 pl-[10px] text-2xl">
      <label htmlFor={id} className={clsx("h-10 w-[146px] shrink-0", tall ? "leading-[50px]" : "leading-[42px]")}>
        {label}
      </label>
      <div className="min-w-0 flex-1">{children}</div>
    </div>
  );
}

function Spinner({ id, value, caption, tall }: { id: string; value: string; caption: string; tall?: boolean }) {
  return (
    <div className="min-w-0 flex-1">
      <div className={clsx("flex border-2 border-[#d9dadd] bg-white", tall ? "h-12" : "h-10")}>
        <input
          id={id}
          defaultValue={value}
          className="min-w-0 flex-1 px-[6px] font-['Liberation_Sans',sans-serif] text-2xl outline-none"
        />
        <div className="flex w-[26px] flex-col items-center justify-between bg-[#d9dadd]">
          <button type="button" aria-label="增加">
            <ChevronUp className="-my-[2px] h-6 w-6" strokeWidth={1.5} />
          </button>
          <button type="button" aria-label="减少">
            <ChevronDown className="-my-[2px] h-6 w-6" strokeWidth={1.5} />
          </button>
        </div>
      </div>
      <label htmlFor={id} className="mt-[10px] block h-[30px] text-center leading-8">
        {caption}
      </label>
    </div>
  );
}

function PropertyPanel() {
  const [valueType, setValueType] = useState("字符串");

  return (
    <aside className="relative flex w-[475px] shrink-0 flex-col border-t border-[#aed8f0] text-black">
      <div className="flex h-[54px] shrink-0 items-center justify-between border-b-2 border-[#d9dadd] pl-5">
        <h1 className="pt-1 text-2xl leading-8">控件设置</h1>
        <button type="button" aria-label="展开面板">
          <svg viewBox="0 0 18 20" className="h-5 w-[18px]" fill="none" aria-hidden="true">
            <path d="M0 8v10h10z" fill="#3f9bfb" />
            <path d="M3 16 18 1" stroke="#3f9bfb" strokeWidth="3" />
          </svg>
        </button>
      </div>
      <div className="mr-[3px] ml-5 flex h-[52px] shrink-0 gap-5 border-b-2 border-[#e6e7ea] pt-[10px] pl-[14px]">
        <ToolButton label="剪切控件"><CutIcon /></ToolButton>
        <ToolButton label="复制控件"><CopyIcon /></ToolButton>
        <ToolButton label="粘贴控件"><PasteIcon /></ToolButton>
        <ToolButton label="删除控件"><DeleteIcon /></ToolButton>
      </div>
      <WidgetTree />
      <div className="relative flex h-[50px] shrink-0 gap-[2px] border-t-2 border-[#d9dadd] text-2xl">
        <Badge n={3} className="-top-[39px] left-[58px]" />
        <button type="button" className="relative h-12 w-[162px] shrink-0 bg-[#f0f0f2] pt-1">
          属性
          <Marker className="-top-[2px] left-[3px] h-[51px] w-40" />
        </button>
        <button type="button" className="h-12 w-[162px] shrink-0 bg-[#d9dadd] pt-1">事件</button>
        <button type="button" className="h-12 w-[162px] shrink-0 bg-[#d9dadd] pt-1">移动端</button>
      </div>
      <div className="flex flex-col gap-5 pt-5 pr-[7px] pl-5">
        <Section title="基本" />
        <Row label="控件名称" id="widget-name">
          <input id="widget-name" defaultValue="layer" className={field} />
        </Row>
        <Check label="可用" />
        <Check label="可见" />
        <Section
          title={
            <>
              坐标<span className="inline-block w-6 text-center">·</span>尺寸
            </>
          }
          className="h-12 pt-[2px]"
        />
        <Row label="控件位置" id="pos-x">
          <div className="flex gap-12 pl-[2px]">
            <Spinner id="pos-x" value="130" caption="横坐标" />
            <Spinner id="pos-y" value="25" caption="纵坐标" />
          </div>
        </Row>
        <Row label="控件大小" id="size-w" tall>
          <div className="flex gap-4 pl-[2px]">
            <Spinner id="size-w" value="80" caption="宽度" tall />
            <button type="button" aria-label="锁定比例" className="flex h-12 items-center">
              <svg viewBox="0 0 16 26" className="h-[26px] w-4" fill="none" aria-hidden="true">
                <path d="M3 15V6l4-4h5l3 4" stroke="#37383c" strokeWidth="2" />
                <rect y="14" width="16" height="11" rx="1" fill="#37383c" />
              </svg>
            </button>
            <Spinner id="size-h" value="21" caption="高度" tall />
          </div>
        </Row>
        <Section title="高级" />
        <Row label="标签名称" id="label-name">
          <input id="label-name" defaultValue="展开层级：" className={field} />
        </Row>
        <Row label="控件值" id="widget-value">
          <div className="flex h-11 border-y-2 border-l-2 border-[#d9dadd] bg-white">
            {["字符串", "字段", "公式"].map((type) => (
              <button
                key={type}
                type="button"
                onClick={() => setValueType(type)}
                className={clsx("flex-1 pt-[2px]", valueType === type && "bg-[#409bfa] text-white")}
              >
                {type}
              </button>
            ))}
          </div>
          <input id="widget-value" className={clsx(field, "mt-2 block")} />
        </Row>
        <Row label="数据字典" id="widget-dict">
          <div className="flex">
            <input id="widget-dict" className={field} />
            <button
              type="button"
              aria-label="编辑数据字典"
              className="flex h-10 w-10 shrink-0 items-center justify-center bg-[#c8c9cc] pr-1"
            >
              <svg viewBox="0 0 20 4" className="h-1 w-5" aria-hidden="true">
                <path d="M0 2h4M8 2h4M16 2h4" stroke="#77787c" strokeWidth="4" />
              </svg>
            </button>
          </div>
          <Marker className="top-0 right-[2px] left-[9px] h-[42px]" />
          <Badge n={4} className="top-0 -left-10" />
        </Row>
        <Check label="去除重复项" />
        <Row label="水印" id="watermark">
          <input id="watermark" className={field} />
        </Row>
        <Row label="字体大小" id="font-size">
          <div className="relative">
            <select
              id="font-size"
              className="h-10 w-full appearance-none border-2 border-[#d9dadd] bg-white px-[6px] text-xl outline-none"
            >
              <option>12</option>
            </select>
            <span className="pointer-events-none absolute top-0 right-0 flex h-10 w-10 items-center justify-center bg-[#d9dadd]">
              <ChevronDown className="h-6 w-6" />
            </span>
          </div>
        </Row>
        <Section title="校验" className="mt-5 h-10" />
        <Check label="允许为空" />
      </div>
    </aside>
  );
}

export default function App() {
  return (
    <div className="flex h-screen overflow-hidden bg-[#f4f5f8] font-['Liberation_Mono','Noto_Sans_CJK_SC',monospace]">
      <main className="flex min-w-0 flex-1 flex-col">
        <Header />
        <div className="flex min-h-0 flex-1 flex-col border-l-2 border-[#e4e4e5]">
          <WidgetBar />
          <Ruler />
          <ParamCanvas />
          <div className="flex h-5 shrink-0 items-center justify-center bg-[#d9dadc]">
            <svg viewBox="0 0 20 4" className="h-1 w-5" aria-hidden="true">
              <path d="M0 2h4M8 2h4M16 2h4" stroke="#66676b" strokeWidth="4" />
            </svg>
          </div>
          <div className="relative min-h-0 flex-1">
            <Grid />
            <DictionaryDialog />
          </div>
        </div>
      </main>
      <Rail />
      <PropertyPanel />
    </div>
  );
}
